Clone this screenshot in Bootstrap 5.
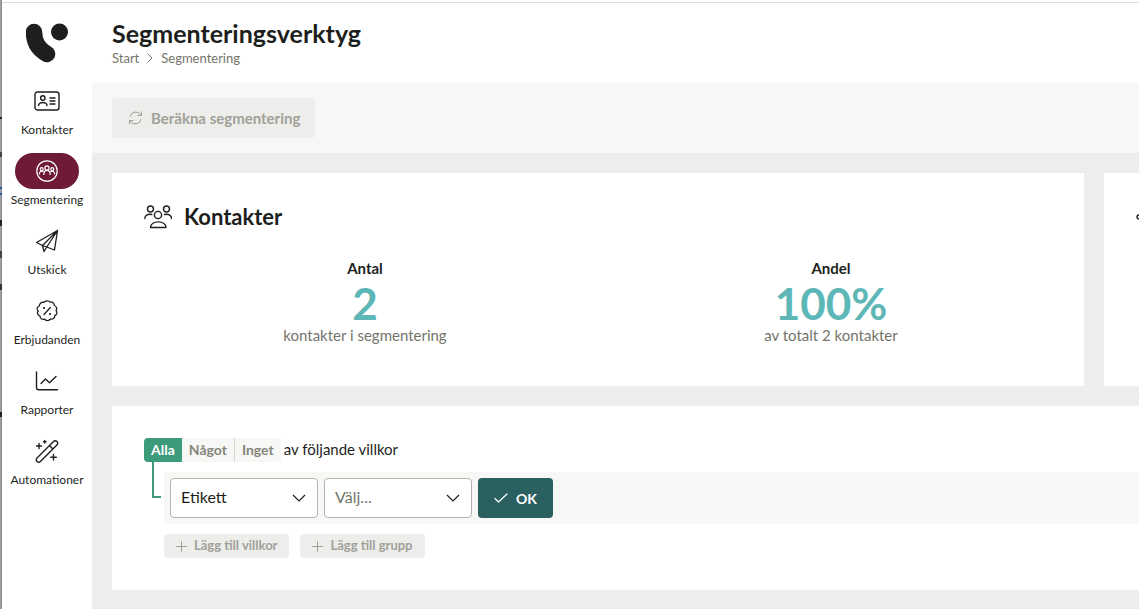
<!DOCTYPE html>
<html lang="sv">
<head>
<meta charset="utf-8">
<meta name="viewport" content="width=device-width, initial-scale=1">
<title>Segmenteringsverktyg</title>
<link rel="stylesheet" href="https://cdn.jsdelivr.net/npm/bootstrap@5.3.0/dist/css/bootstrap.min.css">
<style>
:root{--ink:#1d1f1d;--muted:#74746a;--faint:#a1a198;--panel:#ededeb;--soft:#f7f7f5;--green:#3c9b79;--wine:#6e1a38}
body{font-family:Lato,"Liberation Sans",sans-serif;color:var(--ink);background:#fff;overflow-x:hidden}
svg{display:block;flex:none;fill:none;stroke:currentColor;stroke-linecap:round;stroke-linejoin:round}
.app-shell{min-height:100vh}
/* sliver of the dimmed page underneath the application sheet */
.under-page{width:2px;background:linear-gradient(#222,#222) 0 117px/2px 2px no-repeat,linear-gradient(#444,#444) 0 152px/2px 5px no-repeat,linear-gradient(#2b4f9c,#2b4f9c) 0 187px/2px 2px no-repeat,linear-gradient(#2b4f9c,#2b4f9c) 0 193px/2px 2px no-repeat,linear-gradient(#222,#222) 0 220px/2px 6px no-repeat,linear-gradient(#444,#444) 0 251px/2px 7px no-repeat,linear-gradient(#333,#333) 0 284px/2px 6px no-repeat,linear-gradient(#222,#222) 0 412px/2px 5px no-repeat,linear-gradient(90deg,#a9aaad,#808184)}
.app-top{padding-top:2px}
.app-top::before{content:"";display:block;height:1px;background:#dcdcdc}
.side-menu{width:90px;padding-top:20px}
.brand-mark{margin-bottom:20px}
.side-item{color:var(--ink);text-decoration:none;font-size:12px;line-height:16px;height:70px}
.side-icon{width:64px;height:36px;border-radius:18px;margin-bottom:3px}
.side-item.current .side-icon{background:var(--wine);color:#fff}
.top-bar{height:80px;padding:13px 20px 0}
.top-bar h1{font-size:25px;line-height:34px;font-weight:700;margin:0}
.crumbs{font-size:13px;line-height:16px;color:var(--muted)}
.crumbs a{color:inherit;text-decoration:none}
.tool-bar{background:var(--soft);padding:15px 20px}
.work-area{background:var(--panel);padding:20px 0 19px 20px;gap:20px}
.page-body{min-width:0}
.btn{--bs-btn-border-width:0;--bs-btn-border-radius:4px;font-weight:700}
.btn:disabled{background:var(--panel);color:var(--faint);opacity:1}
.btn-main{height:40px;padding:0 15px 0 16px;font-size:15px}
.btn-quiet{height:24px;padding:0 12px;font-size:13px;gap:7px}
.btn-ok,.btn-ok:hover{background:#2a6160;color:#fff;height:40px;padding:0 16px;font-size:14px;gap:8px}
.panel{background:#fff}
.stat-row{gap:20px}
.stat-panel{flex:0 0 calc(100% - 55px);padding:28px 32px 43px}
.stat-panel h2{font-size:22px;line-height:32px;font-weight:700;margin:0}
.stat-head{gap:12px;margin-bottom:24px}
.stat-name{font-size:15px;line-height:22px;font-weight:700}
.stat-value{font-size:44px;line-height:48px;font-weight:700;color:#5eb7b7}
.stat-note{font-size:15px;line-height:16px;color:var(--muted)}
.rule-panel{padding:32px 0 32px 32px}
.match-group{height:24px}
.match-group label{background:var(--soft);color:#85857b;font-size:14px;font-weight:700;line-height:24px;padding:0 7px}
.match-group label:first-of-type{border-radius:4px 0 0 4px}
.match-group label:last-of-type{border-radius:0 4px 4px 0;border-left:1px solid #d6d6d2}
.match-group input:checked+label{background:var(--green);color:#fff}
.match-line{gap:3px}
.match-text{font-size:15px;line-height:22px}
.branch{width:9px;height:36px;margin:0 3px 0 8px;border-left:2px solid var(--green);border-bottom:2px solid var(--green)}
.rule-row{background:var(--soft);padding:6px;margin-top:10px;gap:6px}
.rule-row .form-select{width:148px;height:40px;border:1px solid #b3b3ae;border-radius:4px;font-size:16px;line-height:20px;padding:6px 32px 8px 10px;color:var(--ink);background-size:14px 14px;background-position:right 11px center;background-image:url("data:image/svg+xml,%3csvg xmlns='http://www.w3.org/2000/svg' viewBox='0 0 14 14'%3e%3cpath fill='none' stroke='%231d1f1d' stroke-width='1.2' d='M1 4l6 6 6-6'/%3e%3c/svg%3e")}
.rule-row .form-select.unset{color:var(--muted)}
.add-row{margin:10px 0 0 20px;gap:11px}
</style>
</head>
<body>
<div class="app-shell d-flex">
  <div class="under-page flex-shrink-0"></div>
  <div class="app-top flex-grow-1 page-body d-flex flex-column">
  <div class="d-flex flex-grow-1">
  <nav class="side-menu d-flex flex-column flex-shrink-0" aria-label="Huvudmeny">
    <a class="brand-mark align-self-center" href="#" aria-label="Start"><svg width="42" height="40" viewBox="0 0 42 40"><path d="M8 9C8 18 12 26 21 31" stroke="#1d1f1d" stroke-width="16.500"/><circle cx="33.500" cy="9" r="8.500" fill="#1d1f1d" stroke="none"/></svg></a>
    <a class="side-item d-flex flex-column align-items-center" href="#"><span class="side-icon d-flex align-items-center justify-content-center"><svg width="26" height="20" viewBox="0 0 26 20" stroke-width="1.400"><rect x="1" y="1" width="24" height="18" rx="2.500"/><circle cx="8.800" cy="7" r="2.200"/><path d="M4.500 14.500c.8-4 7.800-4 8.600 0M16 7h5M16 10h5M16 13h5"/></svg></span>Kontakter</a>
    <a class="side-item current d-flex flex-column align-items-center" href="#" aria-current="page"><span class="side-icon d-flex align-items-center justify-content-center"><svg width="22" height="22" viewBox="0 0 22 22" stroke-width="1.200"><circle cx="11" cy="11" r="10.200"/><circle cx="11" cy="8" r="2.100"/><circle cx="5.700" cy="9.200" r="1.500"/><circle cx="16.300" cy="9.200" r="1.500"/><path d="M7.800 14.500c0-5.500 6.400-5.500 6.400 0M3.400 14c0-2.500 1.800-3.500 3.600-2.500M18.600 14c0-2.500-1.800-3.500-3.600-2.500"/></svg></span>Segmentering</a>
    <a class="side-item d-flex flex-column align-items-center" href="#"><span class="side-icon d-flex align-items-center justify-content-center"><svg width="24" height="24" viewBox="0 0 24 24" stroke-width="1.300"><path d="M22.500 1.500L1.500 13.500l6 3L22.500 1.500 19.500 21l-7.700-3L22.500 1.500M7.500 16.500l1.500 6 2.800-4.500-4.300-1.500"/></svg></span>Utskick</a>
    <a class="side-item d-flex flex-column align-items-center" href="#"><span class="side-icon d-flex align-items-center justify-content-center"><svg width="22" height="22" viewBox="0 0 22 22" stroke-width="1.300"><path d="M11 .8Q13 .7 14 2.100 15.700 1.500 17 2.700 18.400 3.900 18.400 5.500 20 6 20.500 7.600 21 9.200 20 10.600 21.300 12 20.800 13.500 20.400 15 18.800 15.700 18.800 17.500 17.500 18.500 16.200 19.500 14.500 19 13.300 20.500 11.500 20.600 9.500 20.700 8.500 19.200 6.700 19.700 5.300 18.700 4 17.700 4 16 2.300 15.500 1.700 14 1.100 12.400 2.200 11 .8 9.500 1.300 7.900 1.800 6.300 3.400 5.800 3.400 4 4.800 2.900 6.200 1.900 7.900 2.400 9 .9 11 .8zM8 14.500L14.300 7.500"/><path d="M8 8h.1M14 14h.1" stroke-width="2"/></svg></span>Erbjudanden</a>
    <a class="side-item d-flex flex-column align-items-center" href="#"><span class="side-icon d-flex align-items-center justify-content-center"><svg width="24" height="20" viewBox="0 0 24 20" stroke-width="1.400"><path d="M1.500 1v15.500a2.300 2.300 0 0 0 2.300 2.300H22.500M6 12.500L10.500 8l4 3.800L21 5.500"/></svg></span>Rapporter</a>
    <a class="side-item d-flex flex-column align-items-center" href="#"><span class="side-icon d-flex align-items-center justify-content-center"><svg width="24" height="24" viewBox="0 0 24 24" stroke-width="1.400"><path d="M2 19L18.500 2.500a2.300 2.300 0 0 1 3.400 3.400L5.400 22.400A2.300 2.300 0 0 1 2 19M14.500 6.500l3.400 3.400M4 4.500v5M1.500 7h5M18.500 15.500v5.500M15.800 18.300h5.500"/><path d="M9.700 1.500v2.500M8.500 2.700h2.500"/></svg></span>Automationer</a>
  </nav>
  <div class="flex-grow-1 page-body d-flex flex-column">
    <header class="top-bar">
      <h1>Segmenteringsverktyg</h1>
      <nav class="crumbs d-flex align-items-center" aria-label="Sökväg"><a href="#">Start</a><svg class="mx-2" width="6" height="10" viewBox="0 0 6 10"><path d="M1 1l4 4-4 4"/></svg><span>Segmentering</span></nav>
    </header>
    <div class="tool-bar"><button type="button" class="btn btn-main d-inline-flex align-items-center" disabled><svg class="me-2" width="15" height="14" viewBox="0 0 15 14"><path d="M2 5.500A6 6 0 0 1 13 4M13.500 1v3.500H10M13 8.500A6 6 0 0 1 2 10M1.500 13V9.500H5"/></svg>Beräkna segmentering</button></div>
    <main class="work-area d-flex flex-column flex-grow-1">
      <div class="stat-row d-flex overflow-hidden">
        <section class="panel stat-panel">
          <div class="stat-head d-flex align-items-center">
            <svg width="28" height="24" viewBox="0 0 28 24" stroke-width="1.400"><circle cx="6.500" cy="4" r="3"/><circle cx="22.500" cy="4" r="3"/><circle cx="14" cy="10" r="3.600"/><path d="M.8 13.500c0-3.500 3.500-5 7-4M27.500 13.500c0-3.500-3.500-5-7-4M6.500 22.500c0-7.500 15.500-7.500 15.500 0z"/></svg>
            <h2>Kontakter</h2>
          </div>
          <div class="row text-center">
            <div class="col"><div class="stat-name">Antal</div><div class="stat-value">2</div><div class="stat-note">kontakter i segmentering</div></div>
            <div class="col"><div class="stat-name">Andel</div><div class="stat-value">100%</div><div class="stat-note">av totalt 2 kontakter</div></div>
          </div>
        </section>
        <section class="panel stat-panel">
          <div class="stat-head d-flex align-items-center"><svg width="28" height="32" viewBox="0 0 28 32" stroke-width="1.400"><circle cx="3" cy="16" r="2"/><circle cx="23" cy="7" r="3"/><circle cx="23" cy="25" r="3"/><path d="M6 15l14-7M6 17l14 7"/></svg></div>
        </section>
      </div>
      <section class="panel rule-panel">
        <div class="match-line d-flex">
          <div class="match-group d-flex" role="group" aria-label="Matchning">
            <input class="btn-check" type="radio" name="match" id="match-all" checked><label for="match-all">Alla</label>
            <input class="btn-check" type="radio" name="match" id="match-any"><label for="match-any">Något</label>
            <input class="btn-check" type="radio" name="match" id="match-none"><label for="match-none">Inget</label>
          </div>
          <span class="match-text">av följande villkor</span>
        </div>
        <div class="d-flex">
          <div class="branch flex-shrink-0"></div>
          <div class="rule-row d-flex flex-grow-1">
            <select class="form-select" aria-label="Fält"><option>Etikett</option></select>
            <select class="form-select unset" aria-label="Värde"><option>Välj...</option></select>
            <button type="button" class="btn btn-ok d-inline-flex align-items-center"><svg width="14" height="10" viewBox="0 0 14 10" stroke-width="1.200"><path d="M1 5.500L4.500 9 13 1"/></svg>OK</button>
          </div>
        </div>
        <div class="add-row d-flex">
          <button type="button" class="btn btn-quiet d-inline-flex align-items-center" disabled><svg width="11" height="11" viewBox="0 0 11 11"><path d="M5.500 .5v10M.5 5.500h10"/></svg>Lägg till villkor</button>
          <button type="button" class="btn btn-quiet d-inline-flex align-items-center" disabled><svg width="11" height="11" viewBox="0 0 11 11"><path d="M5.500 .5v10M.5 5.500h10"/></svg>Lägg till grupp</button>
        </div>
      </section>
    </main>
  </div>
  </div>
  </div>
</div>
<script src="https://cdn.jsdelivr.net/npm/bootstrap@5.3.0/dist/js/bootstrap.bundle.min.js"></script>
</body>
</html>
